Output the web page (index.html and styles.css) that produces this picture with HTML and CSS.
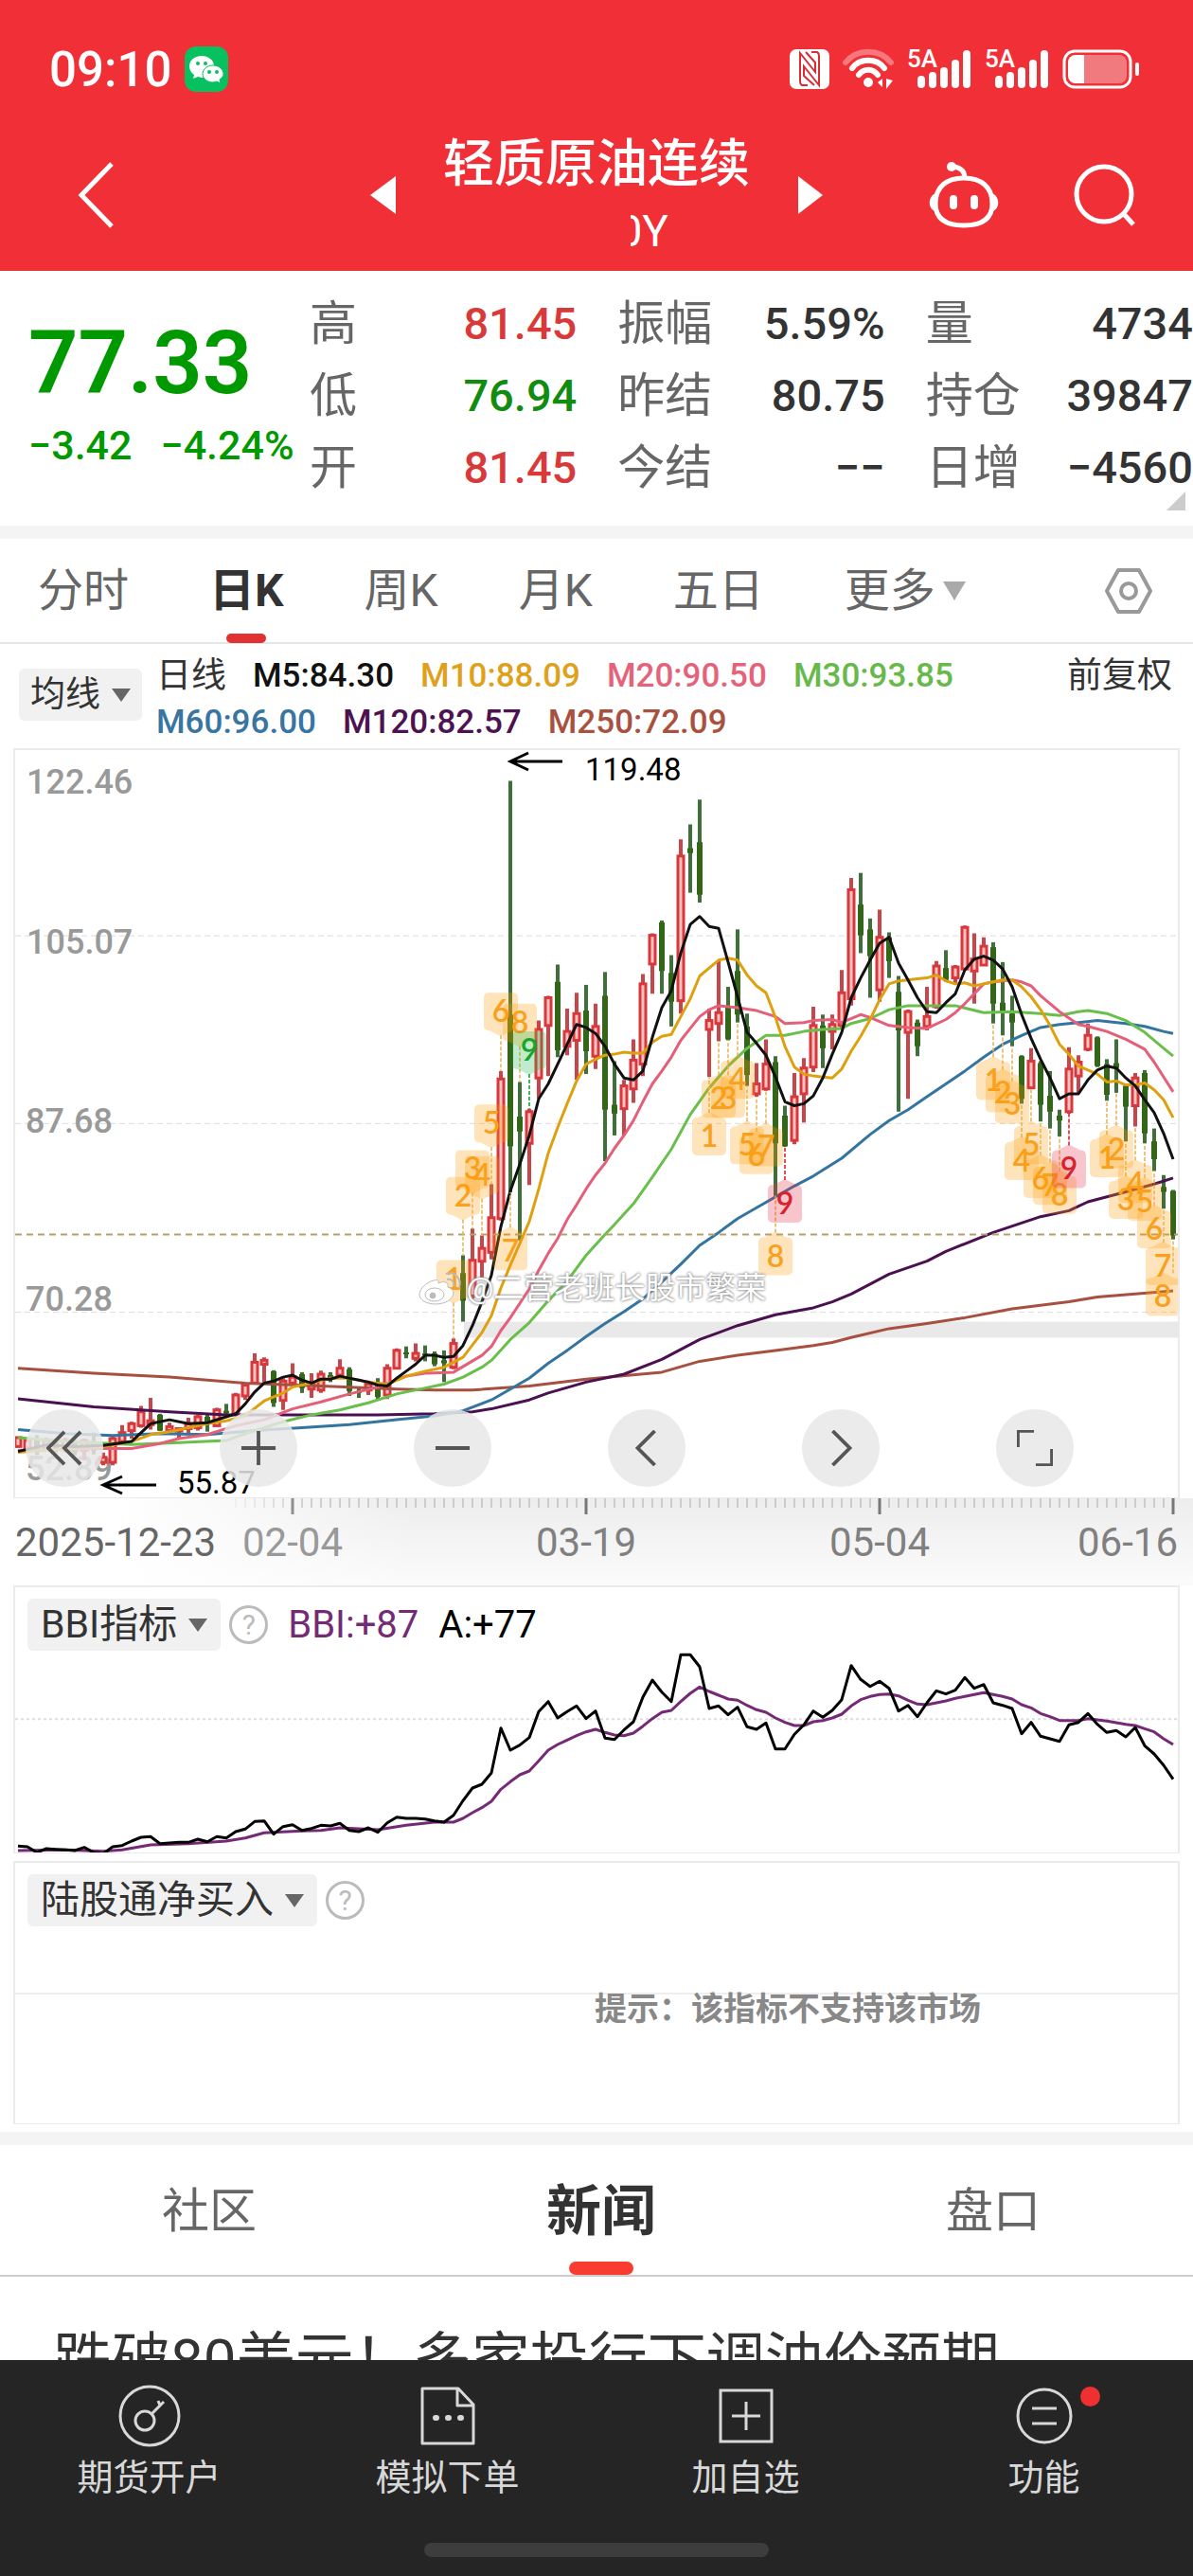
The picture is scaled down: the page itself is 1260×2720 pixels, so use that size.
FILE: index.html
```html
<!DOCTYPE html>
<html lang="zh-CN">
<head>
  <meta charset="UTF-8">
  <meta name="viewport" content="width=device-width, initial-scale=1.0">
  <title>轻质原油连续</title>
  <link rel="stylesheet" href="styles.css">
</head>
<body>
  <header class="header">
    <div class="status-bar">
      <span class="clock">09:10</span>
      <svg class="wechat" viewBox="0 0 46 48" width="46" height="48">
        <rect width="46" height="48" rx="12" fill="#07c160"/>
        <path d="M18 10c-8 0-13 5-13 11 0 4 2 7 5 9l-1 4 5-2 4 1c8 0 13-5 13-12s-6-11-13-11z" fill="#fff"/>
        <path d="M30 20c-6 0-11 4-11 9s5 9 11 9l4-1 4 2-1-4c3-2 4-4 4-6 0-5-5-9-11-9z" fill="#fff" stroke="#07c160"/>
        <g fill="#07c160"><circle cx="14" cy="18" r="2"/><circle cx="22" cy="18" r="2"/><circle cx="26" cy="27" r="2"/><circle cx="34" cy="27" r="2"/></g>
      </svg>
      <div class="status-icons">
        <svg viewBox="0 0 42 42" width="42" height="42">
          <rect width="42" height="42" rx="7" fill="#fff"/>
          <path d="M19 38h-6q-2-1-2-4V4l16 20V14l-10-11" fill="none" stroke="#d92c33" stroke-width="2"/>
          <path d="M23 3h6q2 1 2 4v31L15 18v10l11 10" fill="none" stroke="#d92c33" stroke-width="2"/>
        </svg>
        <svg viewBox="0 0 54 44" width="54" height="44" fill="none" stroke="#fff" stroke-width="6" stroke-linecap="round">
          <path d="M3 15c12-15 36-15 48 0" stroke-opacity=".35"/>
          <path d="M10 21c8-11 26-11 34 0M17 28c5-7 15-7 20 0"/>
          <circle cx="27" cy="36" r="5" fill="#fff" stroke="none"/>
          <path d="M42 32v9l-5-5zM46 43V32l7 2z" fill="#fff" stroke="none"/>
        </svg>
        <div class="signal">
          <span>5A</span>
          <svg viewBox="0 0 58 42" width="58" height="42" stroke="#fff" stroke-width="8" stroke-linecap="round">
            <path d="M5 32v5M17 28v9M29 23v14M41 15v22M53 5v32"/>
          </svg>
        </div>
        <div class="signal">
          <span>5A</span>
          <svg viewBox="0 0 58 42" width="58" height="42" stroke="#fff" stroke-width="8" stroke-linecap="round">
            <path d="M5 32v5M17 28v9M29 23v14M41 15v22M53 5v32"/>
          </svg>
        </div>
        <svg viewBox="0 0 82 42" width="82" height="42">
          <rect x="2" y="2" width="70" height="38" rx="11" fill="none" stroke="#fff" stroke-width="3"/>
          <rect x="6" y="6" width="62" height="30" rx="8" fill="#f07a7e"/>
          <path d="M14 6h9v30h-9a8 8 0 0 1-8-8V14a8 8 0 0 1 8-8z" fill="#fff"/>
          <path d="M79 16v10" stroke="#fff" stroke-width="4" stroke-linecap="round"/>
        </svg>
      </div>
    </div>
    <div class="title-bar">
      <button class="icon-btn back" aria-label="返回">
        <svg viewBox="0 0 40 72" width="40" height="72"><path d="M36 3 4 36l32 33" fill="none" stroke="#fff" stroke-width="5"/></svg>
      </button>
      <div class="title-group">
        <button class="icon-btn" aria-label="上一个">
          <svg viewBox="0 0 28 42" width="28" height="42"><path d="M28 1v40L1 21z" fill="#fff"/></svg>
        </button>
        <div class="title">
          <h1>轻质原油连续</h1>
          <div class="symbol"><span>0Y</span></div>
        </div>
        <button class="icon-btn" aria-label="下一个">
          <svg viewBox="0 0 28 42" width="28" height="42"><path d="M1 1v40l26-20z" fill="#fff"/></svg>
        </button>
      </div>
      <div class="title-actions">
        <button class="icon-btn" aria-label="助手">
          <svg viewBox="0 0 76 72" width="76" height="72" fill="none" stroke="#fff" stroke-width="5">
            <path d="M39 18C39 11 35 7 27 6"/>
            <circle cx="25" cy="6" r="5" fill="#fff" stroke="none"/>
            <path d="M38 18C20 18 8 27 8 45c0 17 12 23 30 23s30-6 30-23C68 27 56 18 38 18z"/>
            <path d="M8 35c-7 4-7 14 0 17M68 35c7 4 7 14 0 17" fill="#fff" stroke-width="2"/>
            <path d="M27 40v7M49 40v7" stroke-width="8" stroke-linecap="round"/>
          </svg>
        </button>
        <button class="icon-btn" aria-label="搜索">
          <svg viewBox="0 0 68 68" width="68" height="68" fill="none" stroke="#fff" stroke-width="5">
            <circle cx="34" cy="33" r="29"/>
            <path d="m54 53 11 12"/>
          </svg>
        </button>
      </div>
    </div>
  </header>

  <main>
    <section class="quote">
      <div class="price">
        <div class="last">77.33</div>
        <div class="change"><span>−3.42</span><span>−4.24%</span></div>
      </div>
      <dl>
        <div><dt>高</dt><dd class="up">81.45</dd></div>
        <div><dt>低</dt><dd class="down">76.94</dd></div>
        <div><dt>开</dt><dd class="up">81.45</dd></div>
      </dl>
      <dl>
        <div><dt>振幅</dt><dd>5.59%</dd></div>
        <div><dt>昨结</dt><dd>80.75</dd></div>
        <div><dt>今结</dt><dd>−−</dd></div>
      </dl>
      <dl>
        <div><dt>量</dt><dd>4734</dd></div>
        <div><dt>持仓</dt><dd>39847</dd></div>
        <div><dt>日增</dt><dd>−4560</dd></div>
      </dl>
      <i class="corner"></i>
    </section>

    <nav class="period-tabs">
      <a href="#">分时</a>
      <a href="#" class="active">日K</a>
      <a href="#">周K</a>
      <a href="#">月K</a>
      <a href="#">五日</a>
      <a href="#" class="more">更多<i class="caret light"></i></a>
      <button class="icon-btn settings" aria-label="设置">
        <svg viewBox="0 0 52 50" width="52" height="50" fill="none" stroke="#999" stroke-width="4">
          <path d="M15 3h22l12 22-12 22H15L3 25z" stroke-linejoin="round"/>
          <circle cx="26" cy="25" r="8"/>
        </svg>
      </button>
    </nav>

    <section class="averages">
      <button class="chip">均线<i class="caret"></i></button>
      <div class="legend">
        <span class="cycle">日线</span>
        <span class="m5">M5:84.30</span>
        <span class="m10">M10:88.09</span>
        <span class="m20">M20:90.50</span>
        <span class="m30">M30:93.85</span>
        <span class="break"></span>
        <span class="m60">M60:96.00</span>
        <span class="m120">M120:82.57</span>
        <span class="m250">M250:72.09</span>
      </div>
      <span class="adjust">前复权</span>
    </section>

    <section class="kline">
      <svg id="kline" viewBox="0 0 1228 789"></svg>
      <div class="watermark">
        <svg viewBox="0 0 46 36" width="46" height="36" fill="#fff" stroke="#bbb">
          <path d="M16 10C8 12 1 19 1 25c0 6 8 10 17 10 11 0 19-6 19-12 0-3-3-5-6-6 1-5-3-7-10-4 1-3-1-4-5-3z"/>
          <ellipse cx="17" cy="25" rx="10" ry="7"/>
          <circle cx="15" cy="26" r="3" fill="#bbb"/>
          <path d="M29 3c9-3 17 5 14 14M30 9c5-1 8 2 7 7" fill="none" stroke-width="2"/>
        </svg>
        <span>@二营老班长股市繁荣</span>
      </div>
      <div class="controls">
        <button aria-label="最左"><svg viewBox="0 0 40 40"><path d="M20 2 2 20l18 18M38 2 20 20l18 18"/></svg></button>
        <button aria-label="放大"><svg viewBox="0 0 40 40"><path d="M1 20h38M20 1v38"/></svg></button>
        <button aria-label="缩小"><svg viewBox="0 0 40 40"><path d="M1 20h38"/></svg></button>
        <button aria-label="左移"><svg viewBox="0 0 40 40"><path d="M29 1 10 20l19 19"/></svg></button>
        <button aria-label="右移"><svg viewBox="0 0 40 40"><path d="m11 1 19 19-19 19"/></svg></button>
        <button aria-label="全屏"><svg viewBox="0 0 40 40"><path d="M1 19V1h18M39 21v18H21"/></svg></button>
      </div>
    </section>

    <div class="timeline">
      <svg id="ticks" viewBox="0 0 1228 18"></svg>
      <div class="dates">
        <span class="start">2025-12-23</span>
        <span class="faded">02-04</span>
        <span>03-19</span>
        <span>05-04</span>
        <span>06-16</span>
      </div>
    </div>

    <section class="panel">
      <div class="panel-head">
        <button class="chip">BBI指标<i class="caret"></i></button>
        <button class="help" aria-label="说明">?</button>
        <span class="bbi">BBI:+87</span>
        <span>A:+77</span>
      </div>
      <svg id="bbi" viewBox="0 0 1228 280"></svg>
    </section>

    <section class="panel empty">
      <div class="panel-head">
        <button class="chip">陆股通净买入<i class="caret"></i></button>
        <button class="help" aria-label="说明">?</button>
      </div>
      <p class="hint">提示：该指标不支持该市场</p>
    </section>

    <nav class="info-tabs">
      <a href="#">社区</a>
      <a href="#" class="active">新闻</a>
      <a href="#">盘口</a>
    </nav>
    <article class="news">
      <a href="#">跌破80美元！多家投行下调油价预期</a>
    </article>
  </main>

  <footer class="bottom">
    <nav>
      <a href="#">
        <svg viewBox="0 0 66 66" width="66" height="66">
          <circle cx="33" cy="33" r="31"/><circle cx="28" cy="38" r="10"/>
          <path d="m35 31 13-13M42 17l2 5"/>
        </svg>
        期货开户
      </a>
      <a href="#">
        <svg viewBox="0 0 66 66" width="66" height="66">
          <path d="M6 4h38l16 17v41H6zM43 4v18h17" stroke-linejoin="round"/>
          <path d="M20 35h1M33 35h1M46 35h1" stroke-width="6" stroke-linecap="round"/>
        </svg>
        模拟下单
      </a>
      <a href="#">
        <svg viewBox="0 0 66 66" width="66" height="66"><path d="M6 6h54v54H6zM18 33h30M33 18v30"/></svg>
        加自选
      </a>
      <a href="#">
        <svg viewBox="0 0 66 66" width="66" height="66"><circle cx="33" cy="33" r="28"/><path d="M20 25h26M20 41h26"/></svg>
        功能
        <i class="dot"></i>
      </a>
    </nav>
    <div class="home-bar"></div>
  </footer>

  <script src="chart.js"></script>
</body>
</html>
```
FILE: styles.css
```css
* {
  box-sizing: border-box;
}
body {
  margin: 0;
  height: 100vh;
  display: flex;
  flex-direction: column;
  background: #fff;
  color: #333;
  font-family: Roboto, "Noto Sans CJK SC", sans-serif;
}
a {
  color: inherit;
  text-decoration: none;
}
button {
  border: 0;
  padding: 0;
  background: none;
  font: inherit;
  color: inherit;
  cursor: pointer;
}
svg {
  display: block;
}

/* header */
.header {
  flex: none;
  height: 286px;
  background: #f12f36;
  color: #fff;
}
.status-bar {
  height: 146px;
  padding: 0 56px 0 52px;
  display: flex;
  align-items: center;
}
.clock {
  font-size: 51px;
  font-weight: 500;
  margin-right: 14px;
}
.status-icons {
  margin-left: auto;
  display: flex;
  align-items: center;
  gap: 14px;
}
.signal {
  position: relative;
  padding-left: 10px;
}
.signal span {
  position: absolute;
  left: 0;
  top: -3px;
  font-size: 26px;
  line-height: 26px;
  font-weight: 500;
}
.title-bar {
  display: grid;
  grid-template-columns: 1fr 480px 1fr;
  grid-template-rows: 120px;
  align-items: center;
}
.icon-btn svg {
  flex: none;
}
.back {
  justify-self: start;
  margin-left: 82px;
}
.title-group {
  display: flex;
  align-items: center;
  justify-content: space-between;
}
.title {
  display: flex;
  flex-direction: column;
  align-items: center;
  padding-top: 6px;
}
.title h1 {
  margin: 0;
  font-size: 54px;
  line-height: 70px;
  font-weight: 500;
}
.symbol {
  width: 40px;
  margin-left: 112px;
  display: flex;
  justify-content: flex-end;
  overflow: hidden;
  font-size: 46px;
  line-height: 70px;
}
.title-actions {
  display: flex;
  align-items: center;
  justify-content: flex-end;
  gap: 76px;
  padding-right: 60px;
}

main {
  flex: 1;
  min-height: 0;
  overflow-y: auto;
  scrollbar-width: none;
}

/* quote */
.quote {
  position: relative;
  display: flex;
  gap: 43px;
  height: 283px;
  padding-top: 18px;
  border-bottom: 14px solid #f4f4f4;
}
.price {
  width: 284px;
  padding-left: 30px;
  color: #090;
  white-space: nowrap;
}
.last {
  margin-top: 26px;
  font-size: 92px;
  line-height: 108px;
  font-weight: 600;
}
.change {
  display: flex;
  gap: 30px;
  font-size: 43px;
  line-height: 64px;
  font-weight: 500;
}
.quote dl {
  flex: 1;
  margin: 0;
}
.quote dl div {
  display: flex;
  justify-content: space-between;
  align-items: center;
  height: 76px;
}
.quote dt {
  font-size: 50px;
  line-height: 76px;
  color: #666;
}
.quote dd {
  margin: 0;
  font-size: 47px;
  line-height: 76px;
  font-weight: 500;
}
.quote .up {
  color: #d83a3a;
}
.quote .down {
  color: #118c11;
}
.corner {
  position: absolute;
  right: 8px;
  bottom: 16px;
  border-left: 20px solid transparent;
  border-bottom: 20px solid #ccc;
}

/* period tabs */
.period-tabs {
  display: flex;
  align-items: center;
  gap: 85px;
  height: 111px;
  padding: 0 42px 0 40px;
  border-bottom: 2px solid #e6e6e6;
  font-size: 48px;
  color: #666;
}
.period-tabs a {
  position: relative;
  line-height: 110px;
}
.period-tabs .active {
  color: #333;
  font-weight: 700;
}
.period-tabs .active::after,
.info-tabs .active::after {
  content: "";
  position: absolute;
  bottom: 0;
  left: 50%;
  transform: translateX(-50%);
  width: 42px;
  height: 10px;
  border-radius: 5px;
  background: #e03133;
}
.more {
  display: flex;
  align-items: center;
  gap: 8px;
}
.settings {
  margin-left: auto;
}
.caret {
  flex: none;
  border: 10px solid transparent;
  border-top: 14px solid #666;
  border-bottom: 0;
}
.caret.light {
  border-width: 20px 12px 0;
  border-top-color: #aaa;
}

/* moving averages */
.averages {
  display: flex;
  align-items: flex-start;
  height: 110px;
  padding: 9px 22px 0 20px;
}
.chip {
  display: flex;
  align-items: center;
  gap: 12px;
  height: 55px;
  padding: 0 14px;
  border-radius: 6px;
  background: #f1f1f1;
  font-size: 41px;
  line-height: 55px;
  white-space: nowrap;
}
.averages .chip {
  margin-top: 17px;
  padding: 0 12px;
  font-size: 37px;
}
.legend {
  flex: 1;
  display: flex;
  flex-wrap: wrap;
  column-gap: 28px;
  margin-left: 15px;
  font-size: 35px;
  line-height: 49px;
  font-weight: 500;
}
.legend .break {
  width: 100%;
}
.cycle,
.adjust {
  font-size: 37px;
  line-height: 49px;
  font-weight: 400;
}
.m5 { color: #111; }
.m10 { color: #dfa11c; }
.m20 { color: #e4637a; }
.m30 { color: #68b94b; }
.m60 { color: #3875a0; }
.m120 { color: #4c1350; }
.m250 { color: #a9513f; }

/* k-line */
.kline {
  position: relative;
  margin: 0 14px;
  border: 2px solid #ebebeb;
  border-bottom-width: 1px;
}
.kline > svg,
.timeline svg,
.panel > svg {
  width: 100%;
}
.axis-label {
  font-size: 36px;
  font-weight: 500;
  fill: #999;
}
.extreme {
  font-size: 33px;
  fill: #000;
}
.mark {
  font-family: Lato, sans-serif;
  font-size: 32px;
  font-weight: 600;
  text-anchor: middle;
}
.watermark {
  position: absolute;
  left: 34%;
  top: 546px;
  display: flex;
  align-items: center;
  gap: 5px;
  margin-left: 8px;
  color: #fff;
  font-size: 32px;
  line-height: 44px;
  text-shadow: 0 0 3px #888, 0 0 3px #999;
}
.controls {
  position: absolute;
  left: 11px;
  bottom: 11px;
  display: flex;
  gap: 123px;
}
.controls button {
  display: grid;
  place-items: center;
  width: 82px;
  height: 82px;
  border-radius: 50%;
  background: rgba(232, 232, 232, 0.85);
}
.controls svg {
  width: 38px;
  height: 38px;
  fill: none;
  stroke: #555;
  stroke-width: 4;
}

/* timeline */
.timeline {
  height: 92px;
  padding: 0 16px;
  background: linear-gradient(90deg, #fff 10%, rgba(255, 255, 255, 0) 35%), linear-gradient(#ededed, #fbfbfb);
}
.dates {
  display: flex;
  font-size: 42px;
  line-height: 58px;
  color: #808080;
}
.dates span {
  flex: 310;
  text-align: center;
}
.dates .start {
  flex: 240;
  text-align: left;
  color: #666;
}
.dates .faded {
  flex: 208;
  text-align: left;
  color: #999;
}
.dates span:last-child {
  flex: 160;
  text-align: right;
}

/* indicator panels */
.panel {
  position: relative;
  margin: 0 14px 8px;
  border: 2px solid #ebebeb;
  border-bottom-width: 1px;
}
.panel-head {
  position: absolute;
  top: 12px;
  left: 13px;
  display: flex;
  align-items: center;
  gap: 9px;
  font-size: 40px;
  color: #000;
}
.panel-head .chip {
  color: #333;
}
.panel-head span {
  margin-left: 12px;
}
.panel-head .bbi {
  color: #732b73;
}
.help {
  width: 41px;
  height: 41px;
  border: 3px solid #bbb;
  border-radius: 50%;
  color: #bbb;
  font-size: 30px;
  line-height: 34px;
}
.empty {
  height: 278px;
  background: linear-gradient(#eee, #eee) 0 137px / 100% 2px no-repeat;
}
.hint {
  margin: 130px 0 0 612px;
  font-size: 34px;
  line-height: 48px;
  font-weight: 700;
  color: #888;
}

/* info tabs */
.info-tabs {
  display: grid;
  grid-template-columns: 1fr 1fr 1fr;
  height: 153px;
  padding: 0 4px 0 14px;
  border-top: 14px solid #f4f4f4;
  border-bottom: 2px solid #ccc;
  text-align: center;
  font-size: 50px;
  line-height: 140px;
  color: #666;
}
.info-tabs a {
  position: relative;
  height: 137px;
}
.info-tabs .active {
  color: #333;
  font-size: 58px;
  font-weight: 700;
}
.info-tabs .active::after {
  width: 68px;
  height: 14px;
  border-radius: 7px;
  background: #f93c30;
}
.news {
  padding: 44px 56px;
  font-size: 62px;
  line-height: 90px;
  white-space: nowrap;
}

/* bottom bar */
.bottom {
  flex: none;
  height: 228px;
  background: #252525;
  color: #d8d8d8;
}
.bottom nav {
  display: grid;
  grid-template-columns: repeat(4, 1fr);
  padding-top: 26px;
}
.bottom a {
  position: relative;
  display: flex;
  flex-direction: column;
  align-items: center;
  gap: 6px;
  font-size: 38px;
  line-height: 52px;
}
.bottom svg {
  fill: none;
  stroke: #d8d8d8;
  stroke-width: 3;
}
.dot {
  position: absolute;
  top: 2px;
  left: 50%;
  margin-left: 38px;
  width: 21px;
  height: 21px;
  border-radius: 50%;
  background: #ee3030;
}
.home-bar {
  width: 364px;
  height: 15px;
  margin: 43px auto 0;
  border-radius: 8px;
  background: #3d3d3d;
}
```
FILE: chart.js
```js
// Vertical values are steps, the top of the plot is 22.
const y = v => (v - 22) / 1.912;
const x = i => i * 10 + 3;

// [direction, high, body top, body bottom, low]
const candles = `
r 1408 1410 1428 1430|r 1412 1416 1430 1436|g 1405 1415 1440 1445|r 1410 1416 1432 1436|g 1412 1418 1434 1440|r 1410 1416 1430 1440
g 1415 1420 1440 1446|r 1412 1416 1436 1456|g 1400 1418 1436 1444|r 1440 1450 1460 1466|r 1406 1412 1460 1466|r 1385 1400 1418 1420
r 1378 1382 1396 1412|r 1346 1358 1386 1390|r 1330 1376 1384 1394|g 1362 1364 1396 1397|r 1380 1388 1396 1397|r 1390 1392 1397 1412
r 1370 1382 1392 1402|r 1364 1368 1390 1396|g 1364 1368 1382 1398|r 1350 1354 1386 1388|g 1342 1356 1361 1364|r 1320 1324 1362 1364
r 1300 1304 1326 1334|r 1240 1258 1300 1301|r 1248 1254 1262 1298|g 1274 1276 1340 1348|r 1290 1296 1335 1354|r 1260 1288 1300 1306
g 1278 1282 1310 1320|r 1280 1300 1312 1330|r 1275 1282 1314 1320|g 1278 1284 1290 1298|r 1252 1270 1284 1290|g 1268 1272 1316 1326
g 1308 1316 1320 1330|r 1295 1302 1314 1324|g 1290 1298 1328 1334|r 1262 1270 1324 1332|r 1230 1234 1270 1272|g 1226 1238 1242 1250
r 1220 1240 1250 1256|g 1224 1240 1244 1256|g 1236 1240 1262 1266|g 1234 1254 1260 1298|r 1210 1220 1268 1272|g 1042 1078 1134 1176
r 988 1052 1124 1130|r 1002 1028 1054 1088|r 898 966 1036 1050|r 670 686 968 972|g 84 556 822 915|g 692 762 792 1012
r 746 752 816 900|r 568 586 684 726|r 518 522 578 680|g 455 490 628 642|r 544 590 620 638|r 512 554 608 688
g 496 548 630 676|r 534 580 640 666|g 470 518 748 852|g 650 738 756 800|r 688 700 746 800|r 606 648 706 734
r 474 494 656 680|r 392 396 454 514|g 366 370 468 514|g 436 472 530 580|r 202 236 528 554|g 172 220 230 310
g 122 208 314 330|r 544 568 586 682|r 448 552 574 610|g 500 542 606 608|g 384 468 556 572|g 554 580 678 700
r 654 696 716 722|r 606 656 706 710|g 640 652 816 922|g 740 760 822 823|r 674 722 810 818|r 644 664 716 774
r 540 578 662 672|g 556 578 624 664|r 556 576 590 626|r 466 512 578 582|r 280 304 524 538|g 270 334 396 432
g 362 384 438 522|r 344 400 506 530|g 390 400 448 482|g 478 510 588 752|r 546 550 592 726|g 566 572 620 640
r 500 560 580 588|r 448 458 540 544|g 426 462 486 490|r 456 460 482 496|r 376 380 464 466|r 392 444 468 534
r 400 418 456 458|g 410 420 534 574|g 450 532 550 598|g 518 554 572 620|g 638 640 726 736|r 624 650 704 706
g 650 654 738 772|g 670 720 752 786|g 748 760 770 802|r 622 666 752 756|r 638 652 680 716|r 574 598 626 630
g 600 602 660 662|g 646 656 718 730|g 606 654 664 714|g 695 700 742 812|r 674 684 740 782|g 668 674 796 816
g 786 812 848 872|g 880 904 914 948|g 910 912 1002 1010`.trim().split(/[|\n]/).map(row => {
  const [dir, ...nums] = row.split(' ');
  return [dir, ...nums.map(Number)];
});

// index:value pairs
const averages = [
  ['#a85040', 3, '0:1270 8:1280 16:1288 24:1300 32:1306 40:1312 44:1314 48:1314 54:1306 60:1292 68:1278 72:1256 76:1244 80:1234 84:1224 86:1218 88:1208 92:1190 96:1180 100:1168 105:1150 111:1136 114:1126 118:1120 122:1114'],
  ['#4a1050', 3, '0:1332 8:1348 16:1358 22:1364 30:1364 38:1364 44:1362 48:1358 50:1352 54:1334 56:1320 60:1298 64:1282 68:1252 72:1212 74:1198 76:1184 80:1162 84:1148 86:1136 88:1120 92:1080 96:1054 98:1034 103:996 108:964 111:952 113:934 117:914 120:898 122:886'],
  ['#34759f', 3, '0:1394 5:1402 10:1406 15:1402 20:1404 25:1396 30:1390 35:1384 40:1374 44:1366 47:1356 50:1334 52:1312 54:1290 56:1260 58:1234 60:1206 62:1180 64:1156 66:1130 68:1096 70:1060 72:1022 74:996 76:968 78:946 80:924 82:902 84:882 87:846 90:798 92:770 94:748 96:722 98:696 100:670 102:642 104:616 106:598 108:582 110:576 112:572 114:568 117:574 119:580 121:590 122:594'],
  ['#6abf4b', 3, '0:1410 5:1418 12:1424 17:1420 22:1416 24:1402 28:1378 31:1364 34:1354 37:1340 40:1322 43:1310 45:1302 47:1288 49:1268 50:1254 52:1212 54:1178 56:1134 58:1094 60:1042 62:1000 63:980 65:938 67:884 69:828 71:758 73:704 75:660 77:624 79:598 81:598 83:590 85:586 87:584 88:574 90:564 92:546 94:538 96:538 99:538 102:552 105:550 108:554 110:558 112:550 113:548 115:554 117:568 119:592 121:624 122:640'],
  ['#e55f78', 3, '0:1436 9:1432 12:1432 15:1422 17:1412 20:1404 23:1386 26:1374 29:1352 32:1338 35:1322 38:1308 41:1286 43:1280 46:1278 49:1244 50:1226 51:1194 52:1168 54:1110 55:1072 56:1038 57:1008 58:970 59:940 60:908 61:880 62:856 63:826 64:800 65:770 66:732 67:696 68:670 69:642 70:608 71:584 72:560 73:546 74:538 76:542 78:548 80:560 81:574 83:572 84:568 86:566 87:572 89:556 90:562 92:578 94:582 96:584 98:566 99:552 100:534 101:514 102:494 103:490 104:488 105:486 106:490 107:498 108:518 110:550 112:576 113:580 115:590 117:606 119:626 120:652 121:682 122:712'],
  ['#dfa010', 3, '0:1440 4:1434 9:1428 12:1418 14:1404 16:1398 18:1390 20:1382 22:1376 24:1366 26:1336 28:1320 29:1308 31:1300 33:1290 35:1290 37:1298 39:1302 41:1286 43:1276 45:1268 47:1248 49:1198 50:1164 51:1108 52:1062 53:1018 54:974 55:908 56:836 57:784 58:736 59:690 60:656 61:646 62:638 63:636 64:632 65:634 66:634 67:612 68:600 69:596 70:560 71:524 72:478 73:462 74:446 75:442 76:446 77:476 78:498 79:512 80:562 81:620 82:662 83:676 84:680 85:682 86:684 87:666 88:630 89:600 90:566 91:526 92:494 93:488 94:486 95:484 96:482 97:476 98:488 99:494 100:492 101:498 102:494 103:490 104:486 105:486 106:500 107:520 108:546 109:578 110:616 111:636 112:660 113:668 114:676 115:692 116:690 117:698 118:698 119:694 120:708 121:728 122:764'],
  ['#111', 3, '0:1438 3:1425 6:1428 9:1426 12:1418 14:1382 16:1374 18:1382 20:1380 22:1368 23:1362 24:1342 25:1318 26:1300 27:1296 28:1288 29:1284 30:1294 31:1300 32:1292 33:1292 34:1286 35:1290 36:1294 37:1298 38:1304 39:1306 40:1290 41:1276 42:1262 43:1244 44:1244 45:1248 46:1246 47:1224 48:1184 49:1136 50:1082 51:984 52:912 53:858 54:800 55:726 56:696 57:656 58:616 59:576 60:582 61:594 62:620 63:656 64:684 65:688 66:670 67:602 68:542 69:508 70:432 71:374 72:358 73:378 74:382 75:450 76:520 77:592 78:614 79:638 80:682 81:732 82:740 83:736 84:720 85:684 86:636 87:592 88:522 89:482 90:446 91:412 92:400 93:452 94:486 95:522 96:550 97:552 98:532 99:514 100:466 101:444 102:438 103:446 104:464 105:500 106:556 107:604 108:646 109:684 110:726 111:716 112:716 113:688 114:668 115:660 116:664 117:684 118:700 119:728 120:754 121:796 122:848']
];

// [index, digit, centre, side of the candle]
const marks = [
  [46, 1, 1090, 'top'], [47, 2, 922, 'top'], [48, 3, 868, 'top'], [49, 4, 880, 'top'], [50, 5, 776, 'top'],
  [51, 6, 550, 'top'], [52, 7, 1034, 'low'], [53, 8, 572, 'top'], [54, 9, 628, 'top'],
  [73, 1, 802, 'low'], [74, 2, 726, 'low'], [75, 3, 726, 'low'], [76, 4, 688, 'low'], [77, 5, 820, 'low'],
  [78, 6, 840, 'low'], [79, 7, 824, 'low'], [80, 8, 1044, 'low'], [81, 9, 938, 'low'],
  [103, 1, 690, 'low'], [104, 2, 715, 'low'], [105, 3, 738, 'low'], [106, 4, 852, 'low'], [107, 5, 820, 'low'],
  [108, 6, 888, 'low'], [109, 7, 902, 'low'], [110, 8, 920, 'low'], [111, 9, 868, 'low'],
  [115, 1, 846, 'low'], [116, 2, 828, 'low'], [117, 3, 930, 'low'], [118, 4, 898, 'low'], [119, 5, 934, 'low'],
  [120, 6, 990, 'low'], [121, 7, 1064, 'low'], [122, 8, 1126, 'low']
];

function line(points, color, width, scale) {
  const d = points.split(' ').map(p => {
    const [i, v] = p.split(':').map(Number);
    return `${x(i)},${scale(v).toFixed(1)}`;
  }).join(' ');
  return `<polyline points="${d}" fill="none" stroke="${color}" stroke-width="${width}" stroke-linejoin="round"/>`;
}

function drawKline() {
  let out = '';
  for (const v of [397, 776, 1157]) {
    out += `<path d="M0 ${y(v)}H1228" stroke="#ddd" stroke-dasharray="6 4"/>`;
  }
  out += `<path d="M474 612H1228" stroke="#e9e9e9" stroke-width="17"/>`;

  [['122.46', 12, 110], ['105.07', 12, 434], ['87.68', 11, 795], ['70.28', 11, 1154], ['52.89', 11, 1496]].forEach(([t, left, v]) => {
    out += `<text class="axis-label" x="${left}" y="${y(v)}">${t}</text>`;
  });

  candles.forEach(([dir, high, top, bottom, low], i) => {
    const cx = x(i);
    const h = y(bottom) - y(top);
    if (dir === 'r') {
      out += `<path d="M${cx} ${y(high)}V${y(top)}M${cx} ${y(bottom)}V${y(low)}" stroke="#c8454a" stroke-width="4"/>`;
      out += `<rect x="${cx - 3}" y="${y(top)}" width="6" height="${h}" fill="#fbc4c0" stroke="#d8383c" stroke-width="3"/>`;
    } else {
      out += `<path d="M${cx} ${y(high)}V${y(low)}" stroke="#40703a" stroke-width="4"/>`;
      out += `<rect x="${cx - 3}" y="${y(top)}" width="6" height="${h}" fill="#34661a"/>`;
    }
  });

  averages.forEach(([color, width, points]) => {
    out += line(points, color, width, y);
  });

  out += `<path d="M0 ${y(1000)}H1228" stroke="#b3a06a" stroke-width="2" stroke-dasharray="7 5"/>`;

  marks.forEach(([i, digit, centre, side]) => {
    const cy = y(centre);
    const cx = Math.min(x(i), 1212);
    const end = side === 'top' ? y(candles[i][1]) : y(candles[i][4]);
    const tip = side === 'top' ? cy + 25 : cy - 25;
    let box = '#ff9f0a', text = '#f9a01c';
    if (digit === 9) {
      box = side === 'top' ? '#22b84c' : '#ea3048';
      text = side === 'top' ? '#17a52c' : '#d8222c';
    }
    const notch = side === 'top' ? `M${cx - 12} ${cy + 20}h24l-12 6z` : `M${cx - 12} ${cy - 20}h24l-12 -6z`;
    out += `<path d="M${x(i)} ${tip}V${end}" stroke="${digit === 9 ? text : '#e6b65c'}" stroke-width="2" stroke-dasharray="4 2" stroke-opacity=".8"/>`;
    out += `<g fill="${box}" fill-opacity=".28"><rect x="${cx - 18}" y="${cy - 20}" width="36" height="40" rx="5"/><path d="${notch}"/></g>`;
    out += `<text class="mark" x="${cx}" y="${cy + 11}" fill="${text}">${digit}</text>`;
  });

  out += `<g fill="none" stroke="#000" stroke-width="3"><path d="M523 12h55M542 3l-19 9 19 9"/><path d="M93 776h56M113 767l-20 9 20 9"/></g>`;
  out += `<text class="extreme" x="602" y="32">119.48</text><text class="extreme" x="171" y="785">55.87</text>`;
  document.getElementById('kline').innerHTML = out;
}

function drawTicks() {
  let out = '';
  for (let i = 23; i <= 122; i++) {
    const major = (122 - i) % 31 === 0;
    const fade = Math.min(1, (i - 21) / 10);
    out += `<path d="M${x(i)} 0V${major ? 17 : 10}" stroke="${major ? '#777' : '#aaa'}" stroke-width="${major ? 3 : 1}" opacity="${fade}"/>`;
  }
  document.getElementById('ticks').innerHTML = out;
}

function drawBbi() {
  const scale = v => (v - 348) / 3;
  const bbi = '0:1182 5:1180 9:1184 11:1180 14:1164 18:1160 22:1152 24:1142 26:1126 30:1120 32:1118 34:1110 38:1116 41:1102 44:1092 46:1092 47:1080 48:1062 49:1046 50:1026 51:988 52:964 53:942 54:930 55:898 56:864 57:846 58:832 59:818 60:806 61:798 62:808 63:816 64:818 65:810 66:788 67:764 68:744 69:738 70:710 71:684 72:664 73:678 74:690 75:702 76:706 77:722 78:736 79:744 80:762 81:776 82:786 83:786 84:774 85:770 86:762 87:750 88:724 89:704 90:694 91:688 92:686 93:692 94:706 95:718 96:720 97:714 98:708 99:700 100:694 101:688 102:682 103:688 104:694 105:702 106:720 107:730 108:748 109:758 110:770 112:770 113:764 115:772 117:782 118:786 119:796 120:806 121:828 122:846';
  const close = [
    1168, 1170, 1188, 1176, 1178, 1180, 1182, 1172, 1188, 1192, 1170, 1166, 1152, 1140, 1138, 1160, 1158, 1156, 1156, 1146,
    1154, 1138, 1142, 1122, 1114, 1090, 1088, 1130, 1106, 1100, 1118, 1112, 1102, 1104, 1096, 1118, 1122, 1110, 1124, 1094,
    1076, 1080, 1080, 1082, 1088, 1092, 1070, 1024, 984, 972, 936, 794, 864, 848, 824, 742, 710, 762, 742, 724,
    764, 740, 826, 830, 800, 774, 696, 642, 680, 710, 562, 562, 600, 732, 724, 752, 728, 790, 798, 778,
    860, 860, 814, 784, 740, 760, 738, 704, 596, 640, 662, 646, 668, 740, 722, 758, 714, 676, 686, 674,
    634, 668, 656, 714, 722, 732, 812, 776, 820, 828, 836, 784, 776, 748, 782, 808, 802, 822, 792, 850,
    876, 912, 956
  ];
  let out = `<path d="M0 ${scale(766)}H1228" stroke="#ddd" stroke-width="2" stroke-dasharray="3 3"/>`;
  out += line(bbi, '#752a75', 3, scale);
  out += line(close.map((v, i) => `${i}:${v}`).join(' '), '#000', 3, scale);
  document.getElementById('bbi').innerHTML = out;
}

drawKline();
drawTicks();
drawBbi();
```
